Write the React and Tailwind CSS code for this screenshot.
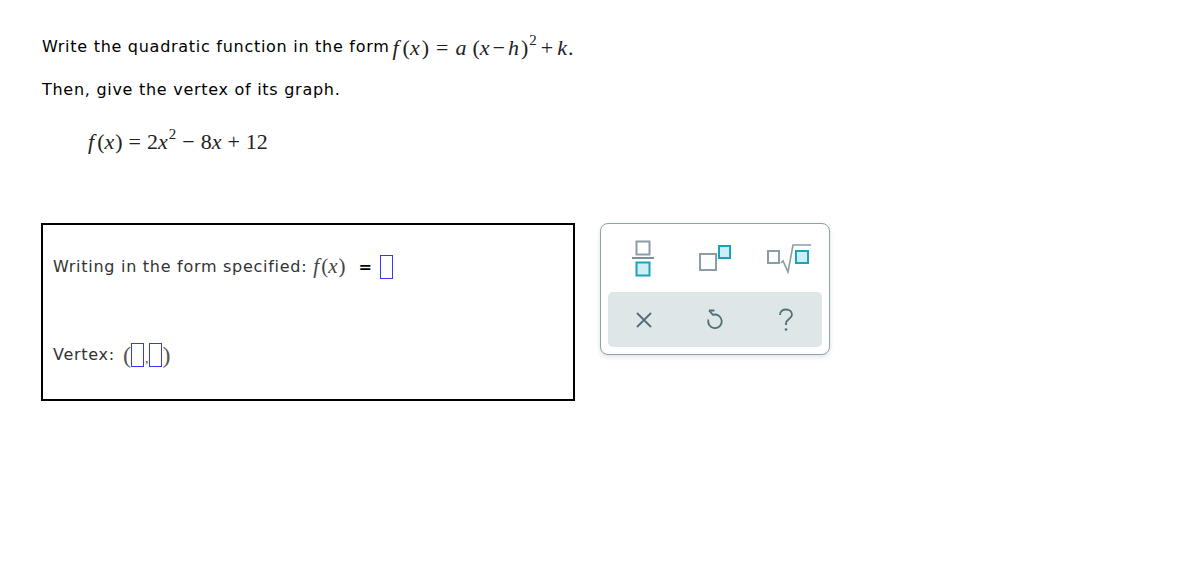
import React from "react";

const sans = { fontFamily: '"DejaVu Sans", Verdana, sans-serif' };
const serif = { fontFamily: '"Liberation Serif", "Times New Roman", serif' };

const Blank = () => (
  <span className="inline-block w-[13px] h-[24px] border border-[#2f3cff] align-middle" />
);

const FracIcon = () => (
  <svg width="24" height="38" viewBox="0 0 24 38">
    <rect x="4.5" y="1.5" width="13" height="13" fill="#fff" stroke="#8a9ea5" strokeWidth="2" />
    <rect x="0" y="17" width="22" height="2" fill="#7a9198" />
    <rect x="4.5" y="22.5" width="13" height="13" fill="#cdeef4" stroke="#1aa3ba" strokeWidth="2" />
  </svg>
);

const SupIcon = () => (
  <svg width="34" height="28" viewBox="0 0 34 28">
    <rect x="1" y="9" width="16" height="16" fill="#fff" stroke="#8a9ea5" strokeWidth="2" />
    <rect x="20" y="1" width="11" height="12" fill="#cdeef4" stroke="#1aa3ba" strokeWidth="2" />
  </svg>
);

const SqrtIcon = () => (
  <svg width="46" height="30" viewBox="0 0 46 30">
    <rect x="2" y="7" width="11" height="12" fill="#fff" stroke="#8a9ea5" strokeWidth="2" />
    <path d="M15 19 L17 17 L22 28 L27 1 L45 1" fill="none" stroke="#8a9ea5" strokeWidth="1.6" />
    <rect x="30" y="7" width="12" height="12" fill="#cdeef4" stroke="#1aa3ba" strokeWidth="2" />
  </svg>
);

const XIcon = () => (
  <svg width="18" height="18" viewBox="0 0 18 18">
    <path d="M2 2 L16 16 M16 2 L2 16" stroke="#4f6f79" strokeWidth="1.8" fill="none" />
  </svg>
);

const UndoIcon = () => (
  <svg width="18" height="21" viewBox="0 0 18 21">
    <path d="M3 1.5 L8.5 1.5 M3 1.5 L7 5.8 A6.8 6.8 0 1 1 2.4 10.5" stroke="#4f6f79" strokeWidth="1.8" fill="none" strokeLinejoin="round" />
  </svg>
);

const HelpIcon = () => (
  <svg width="16" height="24" viewBox="0 0 16 24">
    <path d="M2 7 C2 3 5 1.5 8 1.5 C11.5 1.5 14 3.8 14 6.8 C14 10.5 8 11 8 15.5 L8 17" stroke="#4f6f79" strokeWidth="1.8" fill="none" />
    <circle cx="8" cy="21.5" r="1.3" fill="#4f6f79" />
  </svg>
);

const Sup = ({ children }) => (
  <sup className="text-[15px] relative top-[-10px] ml-[1px]">{children}</sup>
);

export default function App() {
  return (
    <div className="w-[1185px] h-[582px] bg-white text-black" style={sans}>
      <div className="pl-[42px] pt-[35px]">
        <div className="flex items-center h-[24px] text-[16px]">
          <span className="tracking-[0.72px]">Write the quadratic function in the form</span>
          <span className="ml-[3px] text-[22px] text-[#222] whitespace-nowrap" style={serif}>
            <i>f</i>
            <span className="ml-[4px]">(</span>
            <i>x</i>
            <span className="ml-[2px]">)</span>
            <span className="mx-[7px]">=</span>
            <i>a</i>
            <span className="ml-[6px]">(</span>
            <i>x</i>
            <span className="mx-[3px]">−</span>
            <i>h</i>
            <span className="ml-[2px]">)</span>
            <Sup>2</Sup>
            <span className="mx-[4px]">+</span>
            <i>k</i>
            <span className="ml-[1px]">.</span>
          </span>
        </div>
        <div className="mt-[19px] h-[24px] flex items-center text-[16px] tracking-[0.72px]">
          Then, give the vertex of its graph.
        </div>
        <div className="mt-[25px] ml-[46px] h-[28px] flex items-center text-[22px] text-[#222]" style={serif}>
          <span className="whitespace-nowrap">
            <i>f</i>
            <span className="ml-[3px]">(</span>
            <i>x</i>
            <span className="ml-[1px]">)</span>
            <span className="mx-[6px]">=</span>
            <span>2</span>
            <i>x</i>
            <Sup>2</Sup>
            <span className="mx-[6px]">−</span>
            <span>8</span>
            <i>x</i>
            <span className="mx-[6px]">+</span>
            <span>12</span>
          </span>
        </div>
      </div>

      <div className="flex items-start ml-[41px] mt-[68px] gap-[25px]">
        <div className="w-[534px] h-[178px] border-2 border-black pl-[10px] text-[16px] text-[#333]">
          <div className="mt-[29px] flex items-center h-[26px]">
            <span className="tracking-[0.72px]">Writing in the form specified:</span>
            <span className="ml-[6px] text-[21px] text-[#444] whitespace-nowrap" style={serif}>
              <i>f</i>
              <span className="ml-[2px]">(</span>
              <i>x</i>
              <span className="ml-[1px]">)</span>
            </span>
            <span className="ml-[13px] mr-[8px] font-bold text-black">=</span>
            <Blank />
          </div>
          <div className="mt-[62px] flex items-center h-[26px]">
            <span className="tracking-[0.72px]">Vertex:</span>
            <span className="ml-[8px] text-[24px] text-[#555] flex items-center" style={serif}>
              <span>(</span>
              <Blank />
              <span className="text-[14px] mx-[1px] mt-[6px]">,</span>
              <Blank />
              <span>)</span>
            </span>
          </div>
        </div>

        <div className="w-[230px] h-[132px] rounded-[8px] border border-[#8ea2a9] bg-white shadow-[0_2px_5px_rgba(0,0,0,0.12)] px-[7px] pb-[7px] flex flex-col">
          <div className="grid grid-cols-3 h-[68px] items-center justify-items-center">
            <div className="pt-[1px]"><FracIcon /></div>
            <div className="pt-[2px] pl-[2px]"><SupIcon /></div>
            <div className="pl-[6px] pt-[2px]"><SqrtIcon /></div>
          </div>
          <div className="flex-1 grid grid-cols-3 items-center justify-items-center rounded-[5px] bg-[#dfe6e8]">
            <XIcon />
            <UndoIcon />
            <HelpIcon />
          </div>
        </div>
      </div>
    </div>
  );
}
